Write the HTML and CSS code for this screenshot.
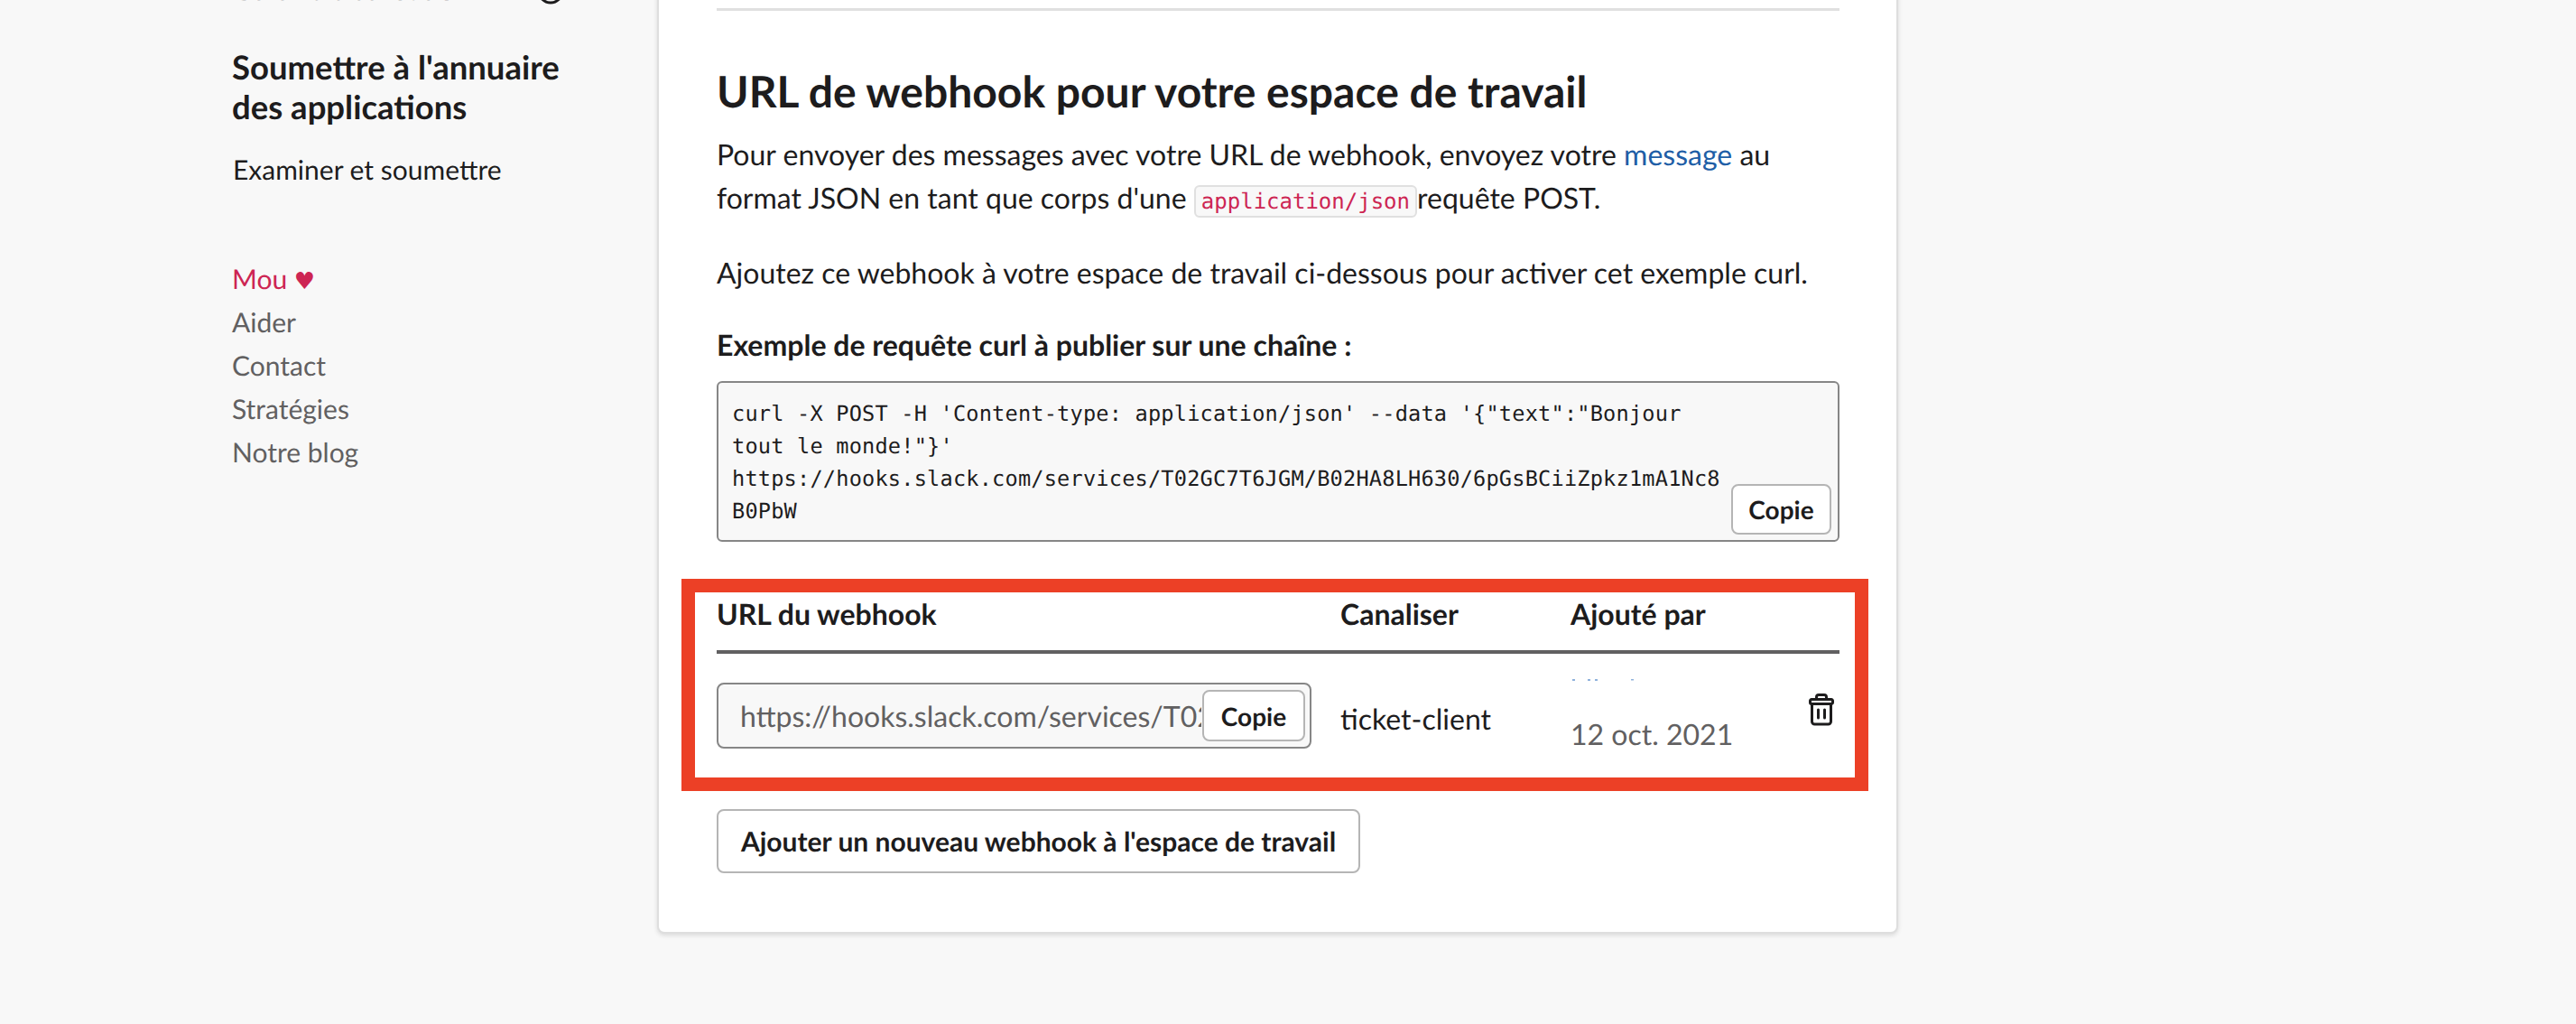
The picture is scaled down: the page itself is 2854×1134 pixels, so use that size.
FILE: index.html
```html
<!DOCTYPE html>
<html lang="fr">
<head>
<meta charset="utf-8">
<title>URL de webhook</title>
<link rel="stylesheet" href="styles.css">
</head>
<body>
<div class="page">
  <aside class="side">
    <div class="clip-row"><span class="clip-text">Gérer la distribution</span><svg class="clip-icon" width="30" height="30" viewBox="0 0 30 30"><circle cx="15" cy="15" r="13" fill="none" stroke="#1d1c1d" stroke-width="3"/></svg></div>
    <h3 class="side-title">Soumettre à l'annuaire des applications</h3>
    <p class="side-link">Examiner et soumettre</p>
    <nav class="side-nav">
      <a class="nav-item nav-love">Mou <span class="heart">♥</span></a>
      <a class="nav-item">Aider</a>
      <a class="nav-item">Contact</a>
      <a class="nav-item">Stratégies</a>
      <a class="nav-item">Notre blog</a>
    </nav>
  </aside>
  <main class="card">
    <hr class="rule">
    <h2 class="title">URL de webhook pour votre espace de travail</h2>
    <p class="para">Pour envoyer des messages avec votre URL de webhook, envoyez votre <a class="link">message</a> au format JSON en tant que corps d'une <code class="inline">application/json</code>requête POST.</p>
    <p class="para para-gap">Ajoutez ce webhook à votre espace de travail ci-dessous pour activer cet exemple curl.</p>
    <p class="label">Exemple de requête curl à publier sur une chaîne :</p>
    <div class="code">
      <pre class="code-text">curl -X POST -H 'Content-type: application/json' --data '{"text":"Bonjour
tout le monde!"}'
https://hooks.slack.com/services/T02GC7T6JGM/B02HA8LH630/6pGsBCiiZpkz1mA1Nc8
B0PbW</pre>
      <button class="btn btn-code">Copie</button>
    </div>
    <section class="hook">
      <div class="hook-row hook-head">
        <div class="c-url">URL du webhook</div>
        <div class="c-chan">Canaliser</div>
        <div class="c-by">Ajouté par</div>
      </div>
      <div class="hook-row hook-body">
        <div class="c-url">
          <div class="url-box"><span class="url-text">https://hooks.slack.com/services/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</span><button class="btn btn-url">Copie</button></div>
        </div>
        <div class="c-chan chan-name">ticket-client</div>
        <div class="c-by by-cell">
          <svg class="by-hidden" width="70" height="3" viewBox="0 0 70 3"><path d="M2 1h3M19 1h3M27 1h3M67 0.500h3" stroke="#8fb2dc" stroke-width="2"/></svg>
          <div class="by-date">12 oct. 2021</div>
        </div>
        <svg class="trash" width="28" height="36" viewBox="0 0 28 36" fill="none" stroke="#1d1c1d" stroke-width="3" stroke-linecap="round" stroke-linejoin="round"><path d="M8.500 6.500V4a2.500 2.500 0 0 1 2.500-2.500h6A2.500 2.500 0 0 1 19.500 4v2.500"/><path d="M3 6.500h22a1.500 1.500 0 0 1 1.500 1.500v2a1.500 1.500 0 0 1-1.500 1.500H3A1.500 1.500 0 0 1 1.500 10V8A1.500 1.500 0 0 1 3 6.500z"/><path d="M3.500 11.500V31a3 3 0 0 0 3 3h15a3 3 0 0 0 3-3V11.500"/><path d="M10.500 18v9M17.500 18v9"/></svg>
      </div>
    </section>
    <button class="btn btn-add">Ajouter un nouveau webhook à l'espace de travail</button>
  </main>
</div>
</body>
</html>
```

FILE: styles.css
```css
* { box-sizing: border-box; }
html, body { margin: 0; height: 1134px; overflow: hidden; background: #f8f8f8; }
body { font-family: Lato, "Open Sans", sans-serif; color: #1d1c1d; text-rendering: geometricPrecision; }
.page { display: flex; align-items: flex-start; padding-left: 257px; margin-top: -30px; }
.side { width: 471px; flex: none; }
.clip-row { display: flex; align-items: flex-end; height: 35px; width: 368px; justify-content: space-between; }
.clip-text { font-size: 30px; line-height: 32px; color: #616061; margin-bottom: 0; }
.clip-icon { flex: none; }
.side-title { margin: 47px 0 0; font-size: 36.500px; line-height: 44px; font-weight: 700; width: 400px; }
.side-link { margin: 26px 0 0; font-size: 30px; line-height: 44px; padding-left: 1px; }
.side-nav { display: flex; flex-direction: column; margin-top: 75px; font-size: 30px; color: #616061; }
.nav-item { display: block; height: 48px; line-height: 48px; }
.nav-love { color: #cd2553; }
.heart { font-size: 26px; line-height: 1; font-family: "DejaVu Sans", sans-serif; }
.card { width: 1375px; height: 1064px; background: #fff; border: 2px solid #dedede; border-radius: 8px; box-shadow: 0 2px 5px rgba(0,0,0,.12); padding: 0 63px 0 64px; flex: none; }
.rule { margin: 37px 0 0; border: 0; height: 3px; background: #e0e0e0; }
.title { margin: 60px 0 0; font-size: 48px; line-height: 60px; font-weight: 700; }
.para { margin: 15px 0 0; font-size: 32px; line-height: 48px; }
.para-gap { margin-top: 35px; }
.link { color: #205ea6; }
.inline { font-family: "DejaVu Sans Mono", monospace; font-size: 24px; line-height: 1; color: #cd2553; background: #f8f8f8; border: 2px solid #e0e0e0; border-radius: 6px; padding: 2px 6px; }
.label { margin: 36px 0 0; font-size: 32px; line-height: 40px; font-weight: 700; }
.code { position: relative; margin-top: 20px; height: 178px; border: 2px solid #868686; border-radius: 6px; background: #f8f8f8; padding: 16px 15px; }
.code-text { margin: 0; font-family: "DejaVu Sans Mono", monospace; font-size: 23.600px; letter-spacing: .2px; line-height: 36px; color: #1d1c1d; }
.btn { font-family: Lato, sans-serif; font-weight: 700; color: #1d1c1d; background: #fff; border: 2px solid #b5b5b5; border-radius: 8px; cursor: pointer; padding: 0; text-rendering: geometricPrecision; }
.btn-code { position: absolute; right: 7px; bottom: 6px; width: 111px; height: 56px; font-size: 28px; }
.hook { margin: 41px -32px 0 -39px; border: 15px solid #ec4026; height: 235px; padding: 0 17px 0 24px; }
.hook-row { display: flex; }
.hook-head { height: 68px; padding-top: 2px; border-bottom: 4px solid #616061; font-size: 32px; font-weight: 700; line-height: 44px; }
.c-url { width: 691px; flex: none; }
.c-chan { width: 255px; flex: none; }
.c-by { flex: none; }
.hook-body { position: relative; padding-top: 32px; }
.url-box { position: relative; width: 659px; height: 73px; border: 2px solid #868686; border-radius: 8px; background: #f8f8f8; overflow: hidden; padding-left: 24px; display: flex; align-items: center; }
.url-text { font-size: 32px; color: #616061; white-space: nowrap; overflow: hidden; width: 511px; flex: none; }
.btn-url { position: absolute; right: 5px; top: 6px; width: 114px; height: 57px; font-size: 28px; }
.chan-name { font-size: 32px; line-height: 48px; padding-top: 16px; }
.by-hidden { display: block; margin-top: -4px; }
.by-date { font-size: 32px; line-height: 48px; color: #616061; margin-top: 34px; }
.trash { position: absolute; right: 6px; top: 44px; }
.btn-add { display: block; margin-top: 20px; width: 713px; height: 71px; font-size: 30px; }
```
